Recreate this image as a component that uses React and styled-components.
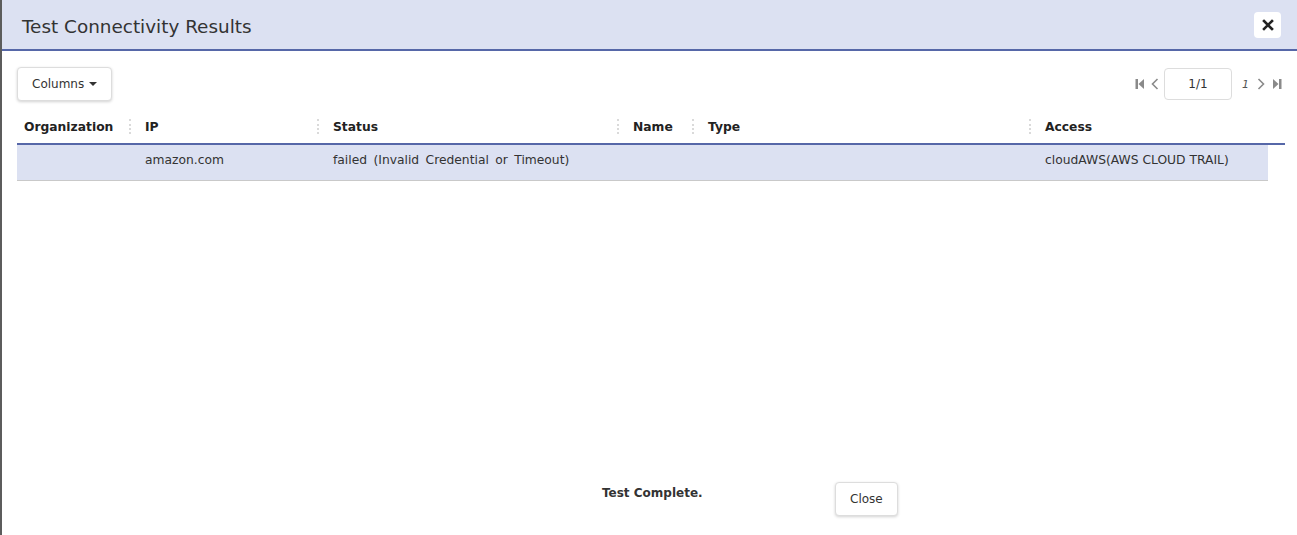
import React from "react";
import styled, { createGlobalStyle } from "styled-components";

const Global = createGlobalStyle`
  html, body { margin: 0; padding: 0; height: 100%; }
  body {
    background: #5c5c5c;
    font-family: "DejaVu Sans", Verdana, sans-serif;
    color: #333;
    overflow: hidden;
  }
`;

const Modal = styled.div`
  margin-left: 2px;
  height: 535px;
  background: #fff;
  display: flex;
  flex-direction: column;
`;

const Header = styled.div`
  height: 51px;
  box-sizing: border-box;
  background: #dce1f2;
  border-bottom: 2px solid #5667a8;
  display: flex;
  align-items: center;
  justify-content: space-between;
  padding: 3px 16px 0 20px;
`;

const Title = styled.h1`
  margin: 0;
  font-size: 18.4px;
  font-weight: normal;
  color: #333;
`;

const CloseX = styled.button`
  width: 27px;
  height: 26px;
  margin-top: -3px;
  border: none;
  border-radius: 4px;
  background: #fff;
  display: flex;
  align-items: center;
  justify-content: center;
  padding: 0;
`;

const Body = styled.div`
  flex: 1;
  padding: 16px 12px 0 15px;
  display: flex;
  flex-direction: column;
`;

const Toolbar = styled.div`
  display: flex;
  justify-content: space-between;
  align-items: center;
`;

const Button = styled.button`
  height: 34px;
  padding: 0 ${(p) => p.$pad || 14}px;
  margin-top: ${(p) => p.$top || 0}px;
  background: #fff;
  border: 1px solid #ddd;
  border-radius: 4px;
  box-shadow: 0 1px 3px rgba(0, 0, 0, 0.18);
  font-family: "DejaVu Sans", Verdana, sans-serif;
  font-size: 12px;
  color: #333;
  display: flex;
  align-items: center;
  gap: 5px;
`;

const Caret = styled.span`
  width: 0;
  height: 0;
  border-left: 4px solid transparent;
  border-right: 4px solid transparent;
  border-top: 4px solid #333;
`;

const Pager = styled.div`
  display: flex;
  align-items: center;
  color: #888;
  margin-right: 3px;
`;

const PagerIcon = styled.span`
  display: flex;
  margin-right: ${(p) => p.$gap || 0}px;
`;

const PageInput = styled.div`
  width: 66px;
  height: 30px;
  border: 1px solid #ddd;
  border-radius: 4px;
  display: flex;
  align-items: center;
  justify-content: center;
  font-size: 12px;
  color: #333;
  margin: 0 10px 0 5px;
`;

const PageTotal = styled.span`
  font-style: italic;
  font-size: 11px;
  color: #555;
  margin-right: 8px;
`;

const Table = styled.div`
  margin-top: 11px;
  display: flex;
  flex-direction: column;
`;

const HeadRow = styled.div`
  display: flex;
  height: 31px;
  align-items: center;
  border-bottom: 2px solid #5667a8;
`;

const HeadCell = styled.div`
  width: ${(p) => p.$w}px;
  flex: ${(p) => (p.$grow ? 1 : "none")};
  display: flex;
  align-items: center;
  justify-content: space-between;
  padding-left: 7px;
  padding-right: 5px;
  padding-bottom: 2px;
  box-sizing: border-box;
  font-weight: bold;
  font-size: 12.3px;
  color: #222;
`;

const Grip = styled.span`
  width: 2px;
  height: 15px;
  border-left: 2px dotted #dadada;
`;

const DataRow = styled.div`
  display: flex;
  height: 35px;
  align-items: center;
  background: #dce1f2;
  border-bottom: 1px solid #c9c9c9;
  margin-right: 17px;
`;

const Cell = styled.div`
  width: ${(p) => p.$w}px;
  flex: ${(p) => (p.$grow ? 1 : "none")};
  padding-left: 7px;
  padding-bottom: 5px;
  box-sizing: border-box;
  font-size: 12.3px;
  word-spacing: ${(p) => p.$ws || 0}px;
  color: #333;
  white-space: nowrap;
`;

const Footer = styled.div`
  margin-top: auto;
  height: 58px;
  display: flex;
  align-items: flex-start;
  padding-left: 585px;
`;

const Status = styled.div`
  font-weight: bold;
  font-size: 12px;
  color: #333;
  margin-top: 9px;
  width: 233px;
`;

const IconFirst = () => (
  <svg width="10" height="12" viewBox="0 0 10 12">
    <rect x="0.5" y="1" width="2.5" height="10" fill="#8a8a8a" />
    <path d="M9 1 L3.5 6 L9 11 Z" fill="#8a8a8a" />
  </svg>
);
const IconLast = () => (
  <svg width="10" height="12" viewBox="0 0 10 12">
    <rect x="7" y="1" width="2.5" height="10" fill="#8a8a8a" />
    <path d="M1 1 L6.5 6 L1 11 Z" fill="#8a8a8a" />
  </svg>
);
const Chevron = ({ dir }) => (
  <svg width="8" height="14" viewBox="0 0 8 14">
    <path
      d={dir === "left" ? "M6.5 2 L1.5 7 L6.5 12" : "M1.5 2 L6.5 7 L1.5 12"}
      fill="none"
      stroke="#8a8a8a"
      strokeWidth="1.6"
    />
  </svg>
);

const cols = [
  { name: "Organization", w: 121 },
  { name: "IP", w: 188 },
  { name: "Status", w: 300, ws: 2.5 },
  { name: "Name", w: 75 },
  { name: "Type", w: 337 },
  { name: "Access", grow: true },
];

const row = ["", "amazon.com", "failed (Invalid Credential or Timeout)", "", "", "cloudAWS(AWS CLOUD TRAIL)"];

export default function App() {
  return (
    <>
      <Global />
      <Modal>
        <Header>
          <Title>Test Connectivity Results</Title>
          <CloseX>
            <svg width="12" height="12" viewBox="0 0 12 12">
              <path d="M2 2 L10 10 M10 2 L2 10" stroke="#222" strokeWidth="2.6" strokeLinecap="square" />
            </svg>
          </CloseX>
        </Header>
        <Body>
          <Toolbar>
            <Button>
              Columns <Caret />
            </Button>
            <Pager>
              <PagerIcon $gap={6}>
                <IconFirst />
              </PagerIcon>
              <PagerIcon>
                <Chevron dir="left" />
              </PagerIcon>
              <PageInput>1/1</PageInput>
              <PageTotal>1</PageTotal>
              <PagerIcon $gap={7}>
                <Chevron dir="right" />
              </PagerIcon>
              <PagerIcon>
                <IconLast />
              </PagerIcon>
            </Pager>
          </Toolbar>
          <Table>
            <HeadRow>
              {cols.map((c, i) => (
                <HeadCell key={c.name} $w={c.w} $grow={c.grow}>
                  {c.name}
                  {i < cols.length - 1 ? <Grip /> : null}
                </HeadCell>
              ))}
            </HeadRow>
            <DataRow>
              {cols.map((c, i) => (
                <Cell key={c.name} $w={c.w} $grow={c.grow} $ws={c.ws}>
                  {row[i]}
                </Cell>
              ))}
            </DataRow>
          </Table>
          <Footer>
            <Status>Test Complete.</Status>
            <Button $top={5}>Close</Button>
          </Footer>
        </Body>
      </Modal>
    </>
  );
}
